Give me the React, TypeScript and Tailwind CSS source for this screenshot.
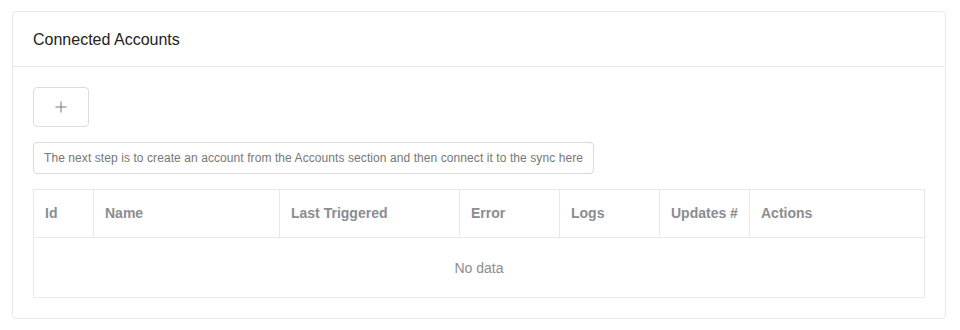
export default function App() {
  const cols = [
    { label: "Id", w: "w-[60px]" },
    { label: "Name", w: "w-[186px]" },
    { label: "Last Triggered", w: "w-[180px]" },
    { label: "Error", w: "w-[100px]" },
    { label: "Logs", w: "w-[100px]" },
    { label: "Updates #", w: "w-[90px]" },
    { label: "Actions", w: "" },
  ];

  return (
    <div className="min-h-[330px] bg-white pl-3 pr-[14px] pt-[11px] font-['Liberation_Sans',Arial,sans-serif]">
      <div className="rounded border border-[#e8e8ee] bg-white">
        <div className="flex h-[55px] items-center border-b border-[#e8e8ee] px-5 pt-[2px]">
          <h2 className="text-[16px] text-[#222]">Connected Accounts</h2>
        </div>
        <div className="px-5 pt-5 pb-5">
          <button className="flex h-[40px] w-[56px] items-center justify-center rounded border border-[#dcdce2] bg-white text-[#777]">
            <svg width="12" height="12" viewBox="0 0 12 12" stroke="currentColor" strokeWidth="1">
              <path d="M6 0.5v11M0.5 6h11" />
            </svg>
          </button>
          <div className="mt-[15px] inline-flex h-[32px] items-center rounded border border-[#d9d9de] px-[10px] text-[12px] tracking-[0.08px] text-[#777]">
            The next step is to create an account from the Accounts section and then connect it to the sync here
          </div>
          <div className="mt-[15px] border border-[#e8e8ee]">
            <div className="flex h-[48px] border-b border-[#e8e8ee]">
              {cols.map((c, i) => (
                <div
                  key={c.label}
                  className={`flex items-center px-[11px] text-[14px] font-bold text-[#8a8d93] ${c.w} ${
                    i < cols.length - 1 ? "border-r border-[#e8e8ee]" : "flex-1"
                  }`}
                >
                  {c.label}
                </div>
              ))}
            </div>
            <div className="flex h-[59px] items-center justify-center pt-[2px] text-[14px] text-[#8a8d93]">No data</div>
          </div>
        </div>
      </div>
    </div>
  );
}
